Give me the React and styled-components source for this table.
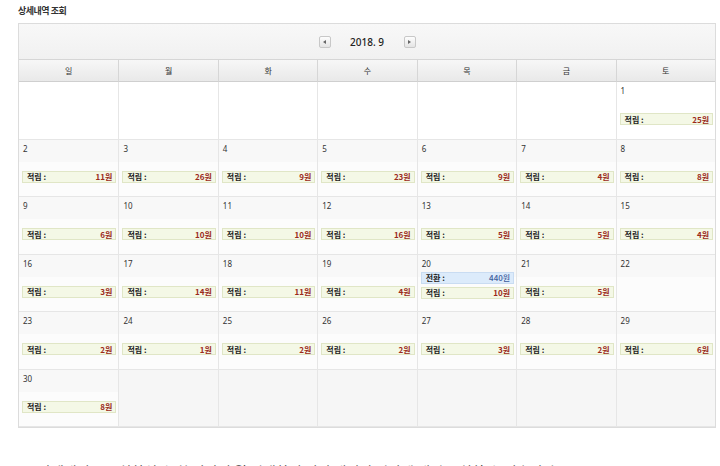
import React from 'react'
import styled, { createGlobalStyle } from 'styled-components'

const GlobalStyle = createGlobalStyle`
  body {
    margin: 0;
    background: #fff;
    font-family: "Noto Sans CJK KR", "Noto Sans", sans-serif;
    color: #333;
  }
`

const Page = styled.div`
  width: 720px;
  height: 466px;
  overflow: hidden;
  padding: 5px 4px 0 18px;
  box-sizing: border-box;
`

const Title = styled.h2`
  margin: 0 0 6px;
  font-size: 9px;
  font-weight: 700;
  color: #333;
  letter-spacing: -0.5px;
  line-height: 12px;
`

const Calendar = styled.div`
  width: 698px;
  border: 1px solid #dcdcdc;
  box-sizing: border-box;
`

const Head = styled.div`
  height: 35px;
  display: flex;
  align-items: center;
  justify-content: center;
  background: linear-gradient(#f8f8f8, #f1f1f1);
  border-bottom: 1px solid #d6d6d6;
`

const NavButton = styled.span`
  width: 12px;
  height: 12px;
  box-sizing: border-box;
  border: 1px solid #c8c8c8;
  border-radius: 2px;
  background: linear-gradient(#fdfdfd, #e4e4e4);
  display: flex;
  align-items: center;
  justify-content: center;
  &::after {
    content: '';
    border-top: 2px solid transparent;
    border-bottom: 2px solid transparent;
    ${p => (p.$dir === 'prev' ? 'border-right: 3px solid #666;' : 'border-left: 3px solid #666;')}
  }
`

const Month = styled.span`
  font-size: 10px;
  font-weight: 500;
  color: #222;
  width: 73px;
  text-align: center;
  font-family: "Noto Sans", "Noto Sans CJK KR", sans-serif;
`

const Grid = styled.div`
  display: grid;
  grid-template-columns: repeat(7, 1fr);
`

const DayName = styled.div`
  height: 21px;
  display: flex;
  align-items: center;
  justify-content: center;
  font-size: 8px;
  color: #333;
  background: linear-gradient(#f7f7f7, #e9e9e9);
  border-bottom: 1px solid #cfcfcf;
  border-left: 1px solid #d6d6d6;
  &:first-child {
    border-left: none;
  }
`

const Cell = styled.div`
  height: 57.5px;
  box-sizing: border-box;
  border-left: 1px solid #e6e6e6;
  border-bottom: 1px solid #e6e6e6;
  padding: 4px 2px 0 3px;
  display: flex;
  flex-direction: column;
  background: ${p =>
    p.$tone === 'blank'
      ? '#fff'
      : p.$tone === 'gray'
      ? '#f6f6f6'
      : 'linear-gradient(#f8f8f8 0, #f8f8f8 22px, #fcfcfc 22px)'};
  &:nth-child(7n + 1) {
    border-left: none;
  }
`

const DateNum = styled.div`
  font-size: 8px;
  color: #333;
  line-height: 10px;
  height: 10px;
  padding-left: 1px;
  font-family: "Noto Sans", sans-serif;
`

const Badges = styled.div`
  margin-top: ${p => (p.$many ? '3px' : '17px')};
  display: flex;
  flex-direction: column;
  gap: 3px;
`

const Badge = styled.div`
  height: 12px;
  box-sizing: border-box;
  display: flex;
  align-items: center;
  justify-content: space-between;
  padding: 0 3px 0 4px;
  font-size: 8px;
  font-weight: 700;
  border: 1px solid ${p => (p.$kind === 'swap' ? '#c9dcf2' : '#e0e6c6')};
  background: ${p => (p.$kind === 'swap' ? '#dcebfb' : '#f4f8e6')};
  color: #222;
  & b {
    color: ${p => (p.$kind === 'swap' ? '#3d5d9c' : '#9b2a1a')};
    font-weight: ${p => (p.$kind === 'swap' ? 500 : 700)};
  }
`

const Note = styled.p`
  margin: 34px 0 0 -18px;
  padding: 0 0 0 22px;
  width: 720px;
  font-size: 14px;
  line-height: 18px;
  color: #444;
  white-space: nowrap;
  background: linear-gradient(#cfcfcf, #cfcfcf) no-repeat 0 4px / 100% 1px;
`

const days = ['일', '월', '화', '수', '목', '금', '토']

const points = {
  1: 25, 2: 11, 3: 26, 4: 9, 5: 23, 6: 9, 7: 4, 8: 8,
  9: 6, 10: 10, 11: 10, 12: 16, 13: 5, 14: 5, 15: 4,
  16: 3, 17: 14, 18: 11, 19: 4, 20: 10, 21: 5,
  23: 2, 24: 1, 25: 2, 26: 2, 27: 3, 28: 2, 29: 6, 30: 8,
}

const swaps = { 20: 440 }

const cells = []
for (let i = 0; i < 42; i++) {
  const d = i - 5
  cells.push(d >= 1 && d <= 30 ? d : null)
}

const App = () => {
  return (
    <Page>
      <GlobalStyle />
      <Title>상세내역 조회</Title>
      <Calendar>
        <Head>
          <NavButton $dir="prev" />
          <Month>2018. 9</Month>
          <NavButton $dir="next" />
        </Head>
        <Grid>
          {days.map(d => (
            <DayName key={d}>{d}</DayName>
          ))}
        </Grid>
        <Grid>
          {cells.map((d, i) => {
            if (!d) return <Cell key={i} $tone={i < 7 ? 'blank' : 'gray'} />
            return (
              <Cell key={i} $tone={i < 7 ? 'blank' : 'date'}>
                <DateNum>{d}</DateNum>
                <Badges $many={!!swaps[d]}>
                  {swaps[d] && (
                    <Badge $kind="swap">
                      <span>전환 :</span>
                      <b>{swaps[d]}원</b>
                    </Badge>
                  )}
                  {points[d] && (
                    <Badge>
                      <span>적립 :</span>
                      <b>{points[d]}원</b>
                    </Badge>
                  )}
                </Badges>
              </Cell>
            )
          })}
        </Grid>
      </Calendar>
      <Note>ㅣ 상세내역을 조회하실 수 한 달간의 월 선택하여 이전 내역의 기간에 대해 조회할 수 있습니다.</Note>
    </Page>
  )
}

export default App
